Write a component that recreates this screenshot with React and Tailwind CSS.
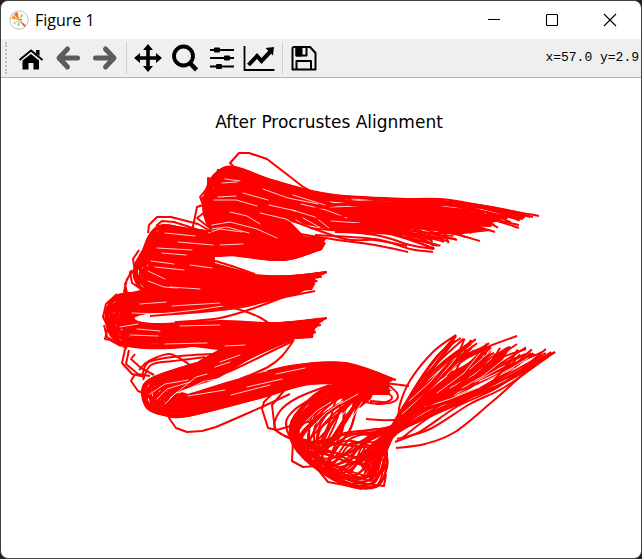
import React from "react";

/* Smooth open curve through a list of points (Catmull-Rom to Bezier). */
function curve(p) {
  let d = `M${p[0][0].toFixed(1)} ${p[0][1].toFixed(1)}`;
  for (let i = 0; i < p.length - 1; i++) {
    const a = p[i - 1] || p[i];
    const b = p[i];
    const c = p[i + 1];
    const e = p[i + 2] || c;
    d += `C${[
      b[0] + (c[0] - a[0]) / 6, b[1] + (c[1] - a[1]) / 6,
      c[0] - (e[0] - b[0]) / 6, c[1] - (e[1] - b[1]) / 6,
      c[0], c[1],
    ].map((v) => v.toFixed(1)).join(" ")}`;
  }
  return d;
}

/* Strands spread between two bounding curves, each with a slow wobble and a
   last point pulled back by up to `ragged` of its final segment. */
function bundle(a, b, n, wobble, ragged = 0) {
  return Array.from({ length: n }, (_, k) => {
    const t = n === 1 ? 0 : k / (n - 1);
    const edge = Math.sin(Math.PI * t);
    const p = a.map(([x, y], i) => {
      const s = t + edge * wobble * Math.sin(k * 2.4 + i * 1.3);
      return [x + (b[i][0] - x) * s, y + (b[i][1] - y) * s];
    });
    const last = p.length - 1;
    const pull = edge * ragged * Math.abs(Math.sin(k * 1.7 + 0.6));
    p[last] = [
      p[last][0] + (p[last - 1][0] - p[last][0]) * pull,
      p[last][1] + (p[last - 1][1] - p[last][1]) * pull,
    ];
    return curve(p);
  });
}

const bundles = [
  [[[325,243],[260,238],[216,231],[204,214],[206,190],[217,172],[235,167],[275,181],[335,195],[430,200],[485,206],[533,217]],
   [[320,250],[285,244],[238,222],[224,212],[226,200],[232,196],[245,200],[285,216],[335,230],[380,232],[410,240],[434,249]], 44, 0.24, 0.7],
  [[[326,238],[250,235],[190,229],[163,225],[150,234],[143,250],[135,265],[135,280],[150,291],[220,288],[315,284]],
   [[318,250],[283,260],[230,255],[185,252],[167,257],[163,263],[166,270],[190,277],[240,276],[290,276],[327,272]], 44, 0.22, 0.2],
  [[[312,285],[220,288],[140,293],[118,295],[107,308],[106,322],[112,337],[128,346],[170,348],[230,342],[313,337]],
   [[300,292],[260,302],[200,311],[155,312],[138,315],[134,318],[138,322],[160,324],[220,321],[275,323],[327,318]], 44, 0.22, 0.2],
  [[[310,331],[235,352],[180,368],[150,379],[142,391],[147,408],[164,415],[188,416],[260,398],[310,384],[365,385]],
   [[290,340],[250,358],[220,376],[195,385],[180,390],[178,393],[184,396],[230,382],[290,366],[345,363],[396,380]], 42, 0.22, 0.2],
  [[[388,379],[330,386],[295,415],[291,440],[310,464],[345,485],[376,487],[387,467],[387,445],[400,422],[420,380],[456,335]],
   [[390,394],[345,396],[311,417],[298,432],[306,441],[325,440],[345,433],[369,430],[392,426],[425,409],[490,390],[555,352]], 26, 0.3, 0.25],
  [[[385,383],[360,403],[350,430],[330,462],[349,480],[374,483],[380,463],[390,433],[413,397],[470,349]],
   [[365,390],[329,410],[302,432],[300,451],[320,468],[339,458],[360,442],[390,427],[430,403],[517,344]], 14, 0.3, 0.25],
  [[[392,380],[365,392],[347,420],[322,455]],
   [[350,384],[315,403],[297,428],[306,455]], 12, 0.2],
];

/* Areas where the strands overlap completely. */
const solids = [
  "M225 170 250 172 290 188 330 203 400 207 440 206 475 212 505 218 490 224 478 225 490 231 472 233 455 235 430 229 390 229 340 231 290 222 245 210 220 200 212 183Z",
  "M212 192 250 198 285 216 305 237 326 243 322 250 295 259 283 261 250 255 220 257 170 257 148 251 151 238 165 228 210 235 255 237 262 233 240 226 212 222 208 205Z",
  "M155 256 215 257 215 263 255 274 290 277 323 273 309 282 315 284 312 290 300 291 275 300 230 306 170 311 120 313 118 295 145 289 143 276 150 270 158 268Z",
  "M125 313 140 324 180 323 265 322 290 323 325 318 316 327 312 337 294 338 255 356 205 376 173 382 200 360 218 350 170 344 135 340 118 325Z",
  "M165 402 175 390 195 396 240 380 295 365 330 362 350 364 375 374 394 379 384 387 393 391 365 390 335 383 300 384 250 397 205 409 174 414Z",
  "M340 388 355 384 380 378 371 399 360 408 343 402Z",
  "M386 430 401 415 415 405 451 379 488 344 478 366 509 350 495 372 463 388 412 413Z",
];

/* Slivers of background left between neighbouring strands. */
const slivers = [
  "M222 183 237 182 M225 179 240 181 M214 200 236 200 257 206 M218 197 236 196",
  "M212 225 230 222 257 229 277 238 M211 229 227 227 249 233 M208 233 220 229 242 232",
  "M263 189 288 198 318 204 M293 195 325 205 M260 213 286 219 302 228 M292 210 315 217 329 228 M301 204 326 210 347 218",
  "M296 220 309 228 316 237 M303 218 319 227 329 235 M269 205 296 211 M243 193 268 200",
  "M230 212 247 216 260 224 M330 207 360 206 M352 199 376 201 388 199 M331 221 360 223",
  "M165 233 195 236 M178 242 213 245 M157 248 192 250 M151 261 174 264 M148 271 165 279 M155 267 184 270",
  "M170 287 200 289 M220 245 243 244 M162 253 186 255 M148 281 164 287 177 288 M190 265 212 268",
  "M132 313 160 314 196 310 223 306 M135 318 165 318 210 314 238 309 M140 304 166 302 M172 306 220 303 M198 316 225 312",
  "M137 329 160 331 M130 335 158 336 M165 344 207 343 M120 327 138 324 M180 326 220 325",
  "M150 394 165 384 188 380 M157 399 167 389 190 382 M165 404 176 393 197 387 M170 398 196 377 207 374",
  "M179 393 205 381 237 376 M220 362 240 355 M225 346 245 345 M188 396 225 390 M240 376 267 371",
  "M215 367 230 362 M231 395 270 385 M276 374 305 368 M247 387 282 379",
  "M409 401 430 382 447 363 M421 397 444 378 460 361 M437 393 464 373 480 353 M450 388 475 374 492 358",
  "M462 388 483 376 508 356 M475 382 502 367 M425 407 450 399 480 387 M455 396 489 381 514 368",
  "M402 414 421 397 M470 369 485 356 496 347 M480 384 510 369 528 358 M430 389 456 358",
  "M331 402 318 410 304 423 M343 401 327 412 310 429 M352 404 338 420 M362 402 351 420 M358 394 340 404",
];

const rough = [
  "M330 203 302 186 267 159 249 153 239 153 230 163 234 167",
  "M218 169 217 181 208 178 208 187 200 197 203 205 197 207 192 231",
  "M205 190 213 190 202 198 209 209 197 218 211 229 204 235",
  "M148 233 149 225 157 217 171 217 198 224 212 232",
  "M156 226 162 221 174 222 202 231",
  "M139 250 133 259 135 271 130 272 132 283 141 289",
  "M134 270 127 279 124 292 132 294 M132 270 125 284 127 293",
  "M117 294 106 304 103 317 108 327 105 339 110 340 121 346",
  "M104 325 107 337 117 343 126 348 129 341",
  "M126 345 122 363 132 374 145 377",
  "M129 350 126 364 138 374 150 376",
  "M135 354 131 359 141 368 154 375",
  "M135 374 131 381 138 391 146 394 147 407 158 412",
  "M172 411 169 418 176 428 187 432 202 431 216 427 230 421 262 407 290 394",
  "M281 385 264 402 262 409 268 428 277 430 294 425 312 421",
  "M288 386 272 405 275 430 285 436 311 441",
  "M293 441 292 461 303 467 315 466 328 482 350 486 361 489 365 484 384 486 386 474",
];

const loose = [
  [[539,216],[485,206],[440,199],[390,199],[320,194],[265,181]],
  [[525,217],[465,204],[420,200],[360,202],[300,211]],
  [[523,219],[465,205],[390,199],[320,194],[265,181]],
  [[519,228],[485,218],[430,211],[370,214],[315,219]],
  [[519,225],[470,215],[410,211],[350,205]],
  [[495,232],[470,225],[420,216],[350,213]],
  [[480,241],[450,233],[400,225],[350,224]],
  [[457,240],[432,234],[390,229],[340,230]],
  [[432,240],[410,235],[370,233],[335,232]],
  [[433,252],[410,249],[375,239],[315,235]],
  [[408,252],[375,245],[345,241],[300,234]],
  [[407,246],[375,240],[345,239],[290,220]],
  [[434,249],[410,245],[375,235],[310,228]],
  [[255,274],[215,261],[183,257]],
  [[315,291],[276,299],[230,309],[150,316]],
  [[294,293],[260,306],[220,318],[175,322]],
  [[220,304],[244,311],[259,317],[270,324]],
  [[294,340],[282,356],[268,367],[240,379]],
  [[293,341],[270,352],[235,369],[205,380]],
  [[190,365],[170,354],[149,361],[139,370]],
  [[205,357],[173,361],[151,365],[143,380]],
  [[235,353],[180,356],[149,362],[142,377]],
  [[409,386],[385,383],[350,378],[310,373],[265,380]],
  [[386,383],[397,393],[395,401],[380,404],[365,402]],
  [[383,390],[392,397],[386,402],[370,401]],
  [[456,335],[434,351],[411,379],[400,404],[397,425],[387,450]],
  [[461,338],[439,354],[415,387],[394,424]],
  [[472,341],[440,368],[408,400],[389,431]],
  [[517,336],[485,348],[455,364],[410,410]],
  [[518,350],[494,380],[465,401],[430,417],[402,438]],
  [[555,352],[525,373],[493,401],[455,432],[425,444],[396,448]],
  [[549,356],[505,387],[470,404],[430,429],[397,439]],
  [[546,349],[500,386],[458,406],[421,431],[395,442]],
  [[366,419],[399,419],[437,401],[485,365],[526,349]],
  [[330,385],[299,397],[280,411],[276,430],[302,444]],
  [[339,390],[306,402],[288,417],[287,430],[294,443],[306,461]],
];

const fan = bundle(
  [[372,481],[381,454],[398,421],[417,390],[442,363],[472,341]],
  [[355,458],[390,434],[420,421],[467,399],[515,377],[555,352]],
  18, 0.25, 0.45
);

function HandPlot() {
  return (
    <svg viewBox="1 138 640 420" className="block w-full" role="img" aria-label="After Procrustes Alignment">
      <g fill="#ff0000">
        {solids.map((d) => <path key={d} d={d} />)}
      </g>
      <g fill="none" stroke="#ff0000" strokeWidth="2" strokeLinejoin="round">
        {bundles.flatMap(([a, b, n, w, r], i) =>
          bundle(a, b, n, w, r).map((d, k) => <path key={`${i}-${k}`} d={d} />)
        )}
        {fan.map((d) => <path key={d} d={d} />)}
      </g>
      <g fill="none" stroke="#ffffff" strokeWidth="0.8" strokeLinecap="round" strokeLinejoin="round">
        {slivers.map((d) => <path key={d} d={d} />)}
      </g>
      <g fill="none" stroke="#ff0000" strokeWidth="2" strokeLinejoin="round">
        {loose.map((p, i) => <path key={i} d={curve(p)} />)}
        {rough.map((d) => <path key={d} d={d} />)}
      </g>
    </svg>
  );
}

function Logo() {
  return (
    <svg viewBox="0 0 20 20" className="size-5" aria-hidden="true">
      <circle cx="10" cy="10" r="9.2" fill="#fff" stroke="#b9bcc0" />
      <path d="M10 10 2.200 8.800 4 4.800Z" fill="#f3a32c" />
      <path d="M10 10 4.800 4 8.500 1.800Z" fill="#ef6b16" />
      <path d="M10 10 12.400 3.600 14.600 5.400Z" fill="#b8d957" />
      <path d="M9.500 9.500 17 15.200 15.200 17Z" fill="#e8651b" />
      <path d="M10 9 10.800 16 8.300 15.700Z" fill="#8ed48e" />
      <path d="M10 10 5.300 14.600 3.900 13Z" fill="#e5cd55" />
      <path d="m8 9.500 5-.6v1.600Z" fill="#5c8ca2" />
    </svg>
  );
}

const icons = {
  Home: (
    <g fill="#000">
      <path d="M14 10 22 16.500V25.500H16.500V19h-5v6.500H5.500v-9Z" />
      <path d="M19 6h3.500v6L19 9.500Z" />
      <path d="M2.500 16 14 6.500 25.500 16" fill="none" stroke="#000" strokeWidth="2" />
    </g>
  ),
  Back: <path d="M23.500 14H6M13.500 5 5 14l8.500 9" fill="none" stroke="#5c5c5c" strokeWidth="5" strokeLinejoin="round" strokeLinecap="round" />,
  Forward: <path d="M4.500 14H22M14.500 5l8.500 9-8.500 9" fill="none" stroke="#5c5c5c" strokeWidth="5" strokeLinejoin="round" strokeLinecap="round" />,
  Pan: (
    <g>
      <path d="M14 4v20M4 14h20" stroke="#000" strokeWidth="3.600" />
      <path d="m14 0 5 6H9ZM14 28l5-6H9ZM0 14l6-5v10ZM28 14l-6-5v10Z" />
    </g>
  ),
  Zoom: (
    <g fill="none" stroke="#000">
      <circle cx="12.500" cy="12" r="9.500" strokeWidth="3.800" />
      <path d="m19 19 6.500 7" strokeWidth="4.600" />
    </g>
  ),
  Subplots: (
    <g>
      <path d="M2 6h24M2 14h24M2 22.500h24" stroke="#000" strokeWidth="1.800" />
      <rect x="6" y="3.500" width="6" height="5" rx="1" />
      <rect x="16" y="11.500" width="6" height="5" rx="1" />
      <rect x="8" y="20" width="6" height="5" rx="1" />
    </g>
  ),
  Customize: (
    <g>
      <path d="M-.5 2v24h30" fill="none" stroke="#000" strokeWidth="1.800" />
      <path d="m3.500 21 8.500-9 4.500 5 9-9.500" fill="none" stroke="#000" strokeWidth="4" />
      <path d="M20.500 4 29 3l-1 8.500Z" />
    </g>
  ),
  Save: (
    <g fill="none" stroke="#000" strokeWidth="2" strokeLinejoin="round">
      <path d="M4 3h16l5.500 6v16.500h-23v-21Q2.500 3 4 3Z" />
      <path d="M6.500 25v-8h14.500v8M6.500 3v8.500h10V3" />
      <path d="M6.500 3h5v8.500h-5Z" fill="#000" />
    </g>
  ),
};

function Tool({ name }) {
  return (
    <button type="button" aria-label={name} title={name} className="flex h-9 w-7 items-center justify-center">
      <svg viewBox="0 0 28 28" className="size-7 overflow-visible">{icons[name]}</svg>
    </button>
  );
}

const captions = {
  Minimize: "M0 5.500h12",
  Maximize: "M1.500.5h9q1 0 1 1v9q0 1-1 1h-9q-1 0-1-1v-9q0-1 1-1Z",
  Close: "m0 0 12 12M12 0 0 12",
};

export default function App() {
  return (
    <div className="min-h-screen bg-[#202020]">
      <main className="flex min-h-screen flex-col overflow-hidden rounded-lg border border-[#404040] bg-white">
        <header className="flex h-[38px] items-center pl-2 pr-0.5">
          <Logo />
          <h1 className="ml-1.5 grow font-['Open_Sans',sans-serif] text-base text-black">Figure 1</h1>
          {Object.entries(captions).map(([name, d]) => (
            <button key={name} type="button" aria-label={name} className="flex h-9 w-[58px] items-center justify-center">
              <svg viewBox="0 0 12 12" className="size-3 overflow-visible" fill="none" stroke="#000" strokeWidth="1.100"><path d={d} /></svg>
            </button>
          ))}
        </header>
        <div role="toolbar" className="flex h-[39px] items-center border-b border-[#b5b5b5] bg-[#efefef] pl-1 pr-0.5">
          <span className="mr-2.5 h-8 border-l-2 border-dotted border-[#bdbdbd]" />
          <div className="flex gap-[9px]">
            <Tool name="Home" />
            <Tool name="Back" />
            <Tool name="Forward" />
          </div>
          <span className="mx-[7px] h-8 w-px bg-[#d0d0d0]" />
          <div className="flex grow items-center gap-[9px]">
            <Tool name="Pan" />
            <Tool name="Zoom" />
            <Tool name="Subplots" />
            <Tool name="Customize" />
          <div className="flex items-center gap-[7px]">
            <span className="h-8 w-px bg-[#d0d0d0]" />
            <Tool name="Save" />
          </div>
          </div>
          <output className="whitespace-pre font-['Liberation_Mono',monospace] text-[13px] text-black">x=57.0 y=2.9</output>
        </div>
        <figure className="flex flex-col pt-[30px]">
          <figcaption className="h-[30px] pl-4 text-center font-['DejaVu_Sans',sans-serif] text-[17px] leading-7 text-black">After Procrustes Alignment</figcaption>
          <HandPlot />
        </figure>
      </main>
    </div>
  );
}
